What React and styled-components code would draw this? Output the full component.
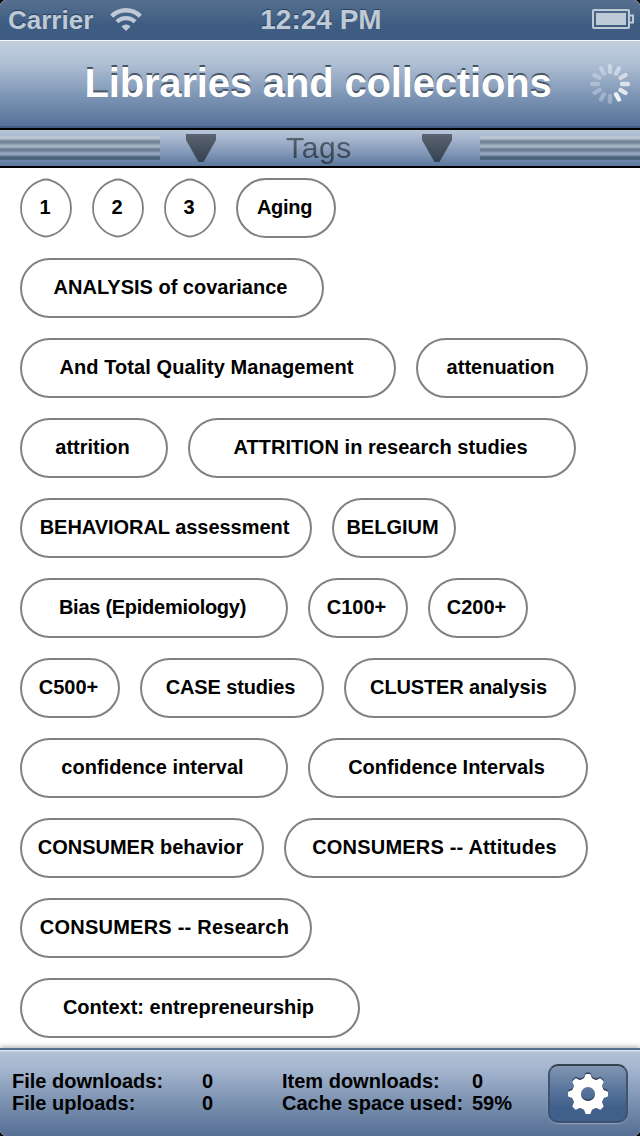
import React from "react";
import styled, { createGlobalStyle } from "styled-components";

const GlobalStyle = createGlobalStyle`
  body { margin: 0; background: #000; }
  * { box-sizing: border-box; }
`;

const Screen = styled.div`
  width: 640px;
  height: 1136px;
  display: flex;
  flex-direction: column;
  overflow: hidden;
  border-radius: 6px;
  background: #fff;
  color: #000;
  font-family: "Liberation Sans", Arial, sans-serif;
  white-space: nowrap;
`;

const StatusBar = styled.header`
  height: 40px;
  flex: none;
  display: grid;
  grid-template-columns: 1fr auto 1fr;
  align-items: center;
  padding: 0 6px 0 8px;
  background: linear-gradient(#566f8e 0, #4b6789 12px, #3f5c82 24px, #3e5b81 100%);
  color: #bfcad7;
  font-weight: bold;
  text-shadow: 0 -1px 1px rgba(20, 35, 60, 0.6);
`;

const Network = styled.div`
  display: flex;
  align-items: center;
  gap: 16px;
  font-size: 26px;
  line-height: 40px;
`;

const Clock = styled.div`
  font-size: 28px;
  line-height: 40px;
`;

const Power = styled.div`
  display: flex;
  justify-content: flex-end;
  margin-top: -2px;
`;

const TitleBar = styled.div`
  height: 88px;
  flex: none;
  display: grid;
  grid-template-columns: 1fr auto 1fr;
  align-items: center;
  padding: 0 10px 0 6px;
  border-top: 1px solid #f3f7fc;
  border-bottom: 2px solid #405b84;
  background: linear-gradient(#c2cfde 0, #b0c0d5 22px, #7e96b5 54px, #587199 100%);
`;

const Title = styled.h1`
  grid-column: 2;
  margin: 0;
  color: #fff;
  font-size: 40px;
  line-height: 85px;
  font-weight: bold;
  letter-spacing: -0.17px;
  text-shadow: 0 -2px 0 #485566;
`;

const Spinner = styled.svg`
  justify-self: end;
`;

const SectionBar = styled.div`
  height: 40px;
  flex: none;
  display: flex;
  align-items: flex-start;
  border-top: 2px solid #000;
  border-bottom: 2px solid #000;
  background: linear-gradient(#b9c7d9 0, #a3b3cc 10px, #7e95b5 24px, #5b789d 100%);
`;

const Grip = styled.div`
  width: 160px;
  height: 24px;
  margin-top: 6px;
  background: linear-gradient(
    #bcc8d5 0, #b4c0cd 3px, #8996a5 4px, #6f7e90 6px, #77889b 7px,
    #9baabd 9px, #aab7c8 11px, #8292a5 12px, #66788e 14px, #70839a 15px,
    #95a7bd 17px, #93a4ba 19px, #5e738b 20px, #4a6079 22px, #50667e 24px
  );
`;

const SectionPicker = styled.div`
  width: 320px;
  height: 36px;
  display: grid;
  grid-template-columns: 30px 1fr 30px;
  padding: 0 28px 0 26px;
`;

const ArrowIcon = styled.svg`
  margin-top: 4px;
`;

const SectionLabel = styled.h2`
  margin: 0;
  text-align: center;
  font-size: 30px;
  line-height: 36px;
  font-weight: normal;
  letter-spacing: 0.6px;
  background: linear-gradient(#5d6672 5px, #323e4e 31px);
  background-clip: text;
  color: transparent;
`;

const TagList = styled.main`
  flex: 1;
  min-height: 0;
  display: flex;
  flex-wrap: wrap;
  align-content: flex-start;
  gap: 20px;
  padding: 10px 20px 0;
`;

const Tag = styled.button`
  display: grid;
  place-items: center;
  width: ${(p) => p.$width}px;
  height: 60px;
  padding: ${(p) => (p.$oval ? "0 0 2px" : "0 3px 2px 0")};
  border: ${(p) => (p.$oval ? "0" : "2px solid #808080")};
  border-radius: 30px;
  background: none;
  color: #000;
  font: bold 20px "Liberation Sans", Arial, sans-serif;
  letter-spacing: ${(p) => p.$spacing || 0}px;
`;

const OvalOutline = styled.svg`
  grid-area: 1 / 1;
  margin-bottom: -2px;
`;

const OvalText = styled.span`
  grid-area: 1 / 1;
  margin-right: 2px;
`;

const Footer = styled.footer`
  height: 88px;
  flex: none;
  display: flex;
  align-items: flex-start;
  padding: 14px 12px 0;
  border-top: 2px solid #566e8f;
  background: linear-gradient(#d7e0eb 0, #d7e0eb 1px, #b0c0d6 2px, #a8b8d0 16px, #7e94b3 50px, #587096 84px);
  box-shadow: 0 -1px 5px rgba(0, 0, 0, 0.35);
`;

const Stats = styled.dl`
  display: grid;
  grid-template-columns: 190px 80px 190px 76px;
  grid-auto-rows: 22px;
  margin: 6px 0 0;
  font-size: 20px;
  line-height: 22px;
  font-weight: bold;
`;

const StatName = styled.dt`
  margin: 0;
`;

const StatValue = styled.dd`
  margin: 0;
`;

const SettingsButton = styled.button`
  width: 80px;
  height: 59px;
  flex: none;
  display: grid;
  place-items: center;
  padding: 0;
  border: 2px solid;
  border-color: #34414f #3f536f #3c5273;
  border-radius: 10px;
  background: linear-gradient(#8296b2, #57749b 45%, #40608b 75%, #41618d);
  box-shadow: 0 1px 1px rgba(200, 215, 235, 0.45);
`;

const TAGS = [
  { text: "1", width: 52, oval: true },
  { text: "2", width: 52, oval: true },
  { text: "3", width: 52, oval: true },
  { text: "Aging", width: 100, spacing: -0.3 },
  { text: "ANALYSIS of covariance", width: 304 },
  { text: "And Total Quality Management", width: 376, spacing: 0.08 },
  { text: "attenuation", width: 172 },
  { text: "attrition", width: 148 },
  { text: "ATTRITION in research studies", width: 388, spacing: 0.04 },
  { text: "BEHAVIORAL assessment", width: 292, spacing: -0.04 },
  { text: "BELGIUM", width: 124 },
  { text: "Bias (Epidemiology)", width: 268, spacing: -0.27 },
  { text: "C100+", width: 100 },
  { text: "C200+", width: 100 },
  { text: "C500+", width: 100 },
  { text: "CASE studies", width: 184, spacing: -0.13 },
  { text: "CLUSTER analysis", width: 232, spacing: -0.13 },
  { text: "confidence interval", width: 268 },
  { text: "Confidence Intervals", width: 280 },
  { text: "CONSUMER behavior", width: 244 },
  { text: "CONSUMERS -- Attitudes", width: 304, spacing: 0.19 },
  { text: "CONSUMERS -- Research", width: 292, spacing: 0.23 },
  { text: "Context: entrepreneurship", width: 340 },
];

const STATS = [
  ["File downloads:", "0"],
  ["Item downloads:", "0"],
  ["File uploads:", "0"],
  ["Cache space used:", "59%"],
];

// Opacity of each spoke, clockwise from twelve o'clock.
const SPOKES = [0.4, 0.46, 0.54, 0.68, 0.76, 0.88, 0.28, 0.28, 0.28, 0.28, 0.28, 0.32];

function WifiIcon() {
  return (
    <svg width="34" height="26" viewBox="0 0 34 26" fill="none" stroke="#bfcad7">
      <path d="M2.7 9.2A20.2 20.2 0 0 1 31.3 9.2" strokeWidth="4.4" />
      <path d="M7.9 14.8A13 13 0 0 1 26.1 14.8" strokeWidth="4.2" />
      <path d="M17 24 12.4 19.4A6.5 6.5 0 0 1 21.6 19.4Z" fill="#bfcad7" stroke="none" />
    </svg>
  );
}

function BatteryIcon() {
  return (
    <svg width="42" height="22" viewBox="0 0 42 22">
      <rect x="1" y="2" width="36" height="18" rx="1" fill="none" stroke="#bfcad7" strokeWidth="2" />
      <rect x="4" y="5" width="30" height="12" fill="#bfcad7" />
      <path d="M38 7.5h3v7h-3" fill="none" stroke="#bfcad7" strokeWidth="2" />
    </svg>
  );
}

function LoadingIcon() {
  return (
    <Spinner width="40" height="40" viewBox="-20 -20 40 40">
      {SPOKES.map((opacity, i) => (
        <rect key={i} x="-2.2" y="-20" width="4.4" height="10" rx="1.8" fill="#fff" opacity={opacity} transform={`rotate(${i * 30})`} />
      ))}
    </Spinner>
  );
}

function Arrow({ id }) {
  return (
    <ArrowIcon width="30" height="28" viewBox="0 0 30 28">
      <linearGradient id={id} x2="0" y2="1">
        <stop stopColor="#5b6470" />
        <stop offset="1" stopColor="#344152" />
      </linearGradient>
      <path d="M0 0H30V6L17.5 28H12.5L0 6Z" fill={`url(#${id})`} />
    </ArrowIcon>
  );
}

function GearShape({ fill }) {
  return (
    <g fill={fill}>
      <path
        fillRule="evenodd"
        d="M0-16A16 16 0 1 1 0 16A16 16 0 1 1 0-16ZM0-7A7 7 0 1 0 0 7A7 7 0 1 0 0-7Z"
      />
      {[0, 45, 90, 135, 180, 225, 270, 315].map((angle) => (
        <path key={angle} d="M-5.5-14.5Q-3.4-15.5-3-18.5Q-2.7-20-1.5-20H1.5Q2.7-20 3-18.5Q3.4-15.5 5.5-14.5Z" transform={`rotate(${angle})`} />
      ))}
    </g>
  );
}

function GearIcon() {
  return (
    <svg width="42" height="44" viewBox="-21 -22 42 44">
      <g transform="translate(0 -1.5)">
        <GearShape fill="#304058" />
      </g>
      <GearShape fill="#fff" />
    </svg>
  );
}

function TagPill({ tag }) {
  if (!tag.oval) {
    return <Tag $width={tag.width} $spacing={tag.spacing}>{tag.text}</Tag>;
  }
  return (
    <Tag $width={tag.width} $oval>
      <OvalOutline width="52" height="60" viewBox="0 0 52 60" fill="none" stroke="#808080" strokeWidth="1.8">
        <path d="M1 30C1 16.5 10 6.5 20 2.8Q26 0.2 32 2.8C42 6.5 51 16.5 51 30C51 43.5 42 53.5 32 57.2Q26 59.8 20 57.2C10 53.5 1 43.5 1 30Z" />
      </OvalOutline>
      <OvalText>{tag.text}</OvalText>
    </Tag>
  );
}

export default function App() {
  return (
    <Screen>
      <GlobalStyle />
      <StatusBar>
        <Network>
          Carrier
          <WifiIcon />
        </Network>
        <Clock>12:24 PM</Clock>
        <Power>
          <BatteryIcon />
        </Power>
      </StatusBar>
      <TitleBar>
        <Title>Libraries and collections</Title>
        <LoadingIcon />
      </TitleBar>
      <SectionBar>
        <Grip />
        <SectionPicker>
          <Arrow id="arrowLeft" />
          <SectionLabel>Tags</SectionLabel>
          <Arrow id="arrowRight" />
        </SectionPicker>
        <Grip />
      </SectionBar>
      <TagList>
        {TAGS.map((tag) => (
          <TagPill key={tag.text} tag={tag} />
        ))}
      </TagList>
      <Footer>
        <Stats>
          {STATS.map(([name, value]) => (
            <React.Fragment key={name}>
              <StatName>{name}</StatName>
              <StatValue>{value}</StatValue>
            </React.Fragment>
          ))}
        </Stats>
        <SettingsButton aria-label="Settings">
          <GearIcon />
        </SettingsButton>
      </Footer>
    </Screen>
  );
}
